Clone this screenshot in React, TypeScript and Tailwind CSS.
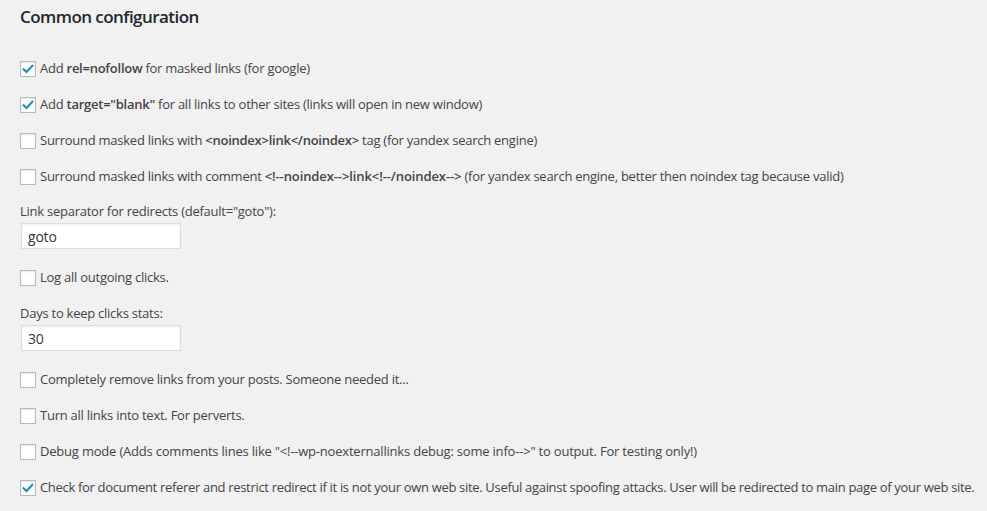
import type { ReactNode } from "react";

const FONT = "font-['Open_Sans','Noto_Sans',sans-serif]";

function Check({ checked }: { checked?: boolean }) {
  return (
    <span className="relative mr-[4px] inline-flex h-[16px] w-[16px] shrink-0 items-center justify-center border border-[#b4b9be] bg-white shadow-[inset_0_1px_2px_rgba(0,0,0,0.1)]">
      {checked && (
        <svg viewBox="0 0 16 16" className="h-[14px] w-[14px]">
          <path d="M3 8.2 L6.3 11.5 L13 4.3" fill="none" stroke="#1e8cbe" strokeWidth="2.4" strokeLinecap="square" />
        </svg>
      )}
    </span>
  );
}

function Row({ checked, children, className = "" }: { checked?: boolean; children: ReactNode; className?: string }) {
  return (
    <label className={`flex h-[36px] items-center whitespace-nowrap ${className}`}>
      <Check checked={checked} />
      <span>{children}</span>
    </label>
  );
}

function Field({ label, value, className = "" }: { label: string; value: string; className?: string }) {
  return (
    <div className={className}>
      <div className="flex h-[20px] items-center">{label}</div>
      <div className="mt-[1px] ml-[1px] flex h-[26px] w-[160px] items-center border border-[#ddd] bg-white px-[6px] text-[14px] tracking-[-0.2px] text-[#32373c] shadow-[inset_0_1px_2px_rgba(0,0,0,0.07)]">
        {value}
      </div>
    </div>
  );
}

export default function App() {
  return (
    <div className={`h-[511px] w-[987px] overflow-hidden bg-[#f1f1f1] pl-[20px] text-[13px] tracking-[-0.25px] text-[#444] ${FONT}`}>
      <h2 className="flex h-[34px] items-center text-[17px] font-semibold tracking-[-0.55px] text-[#23282d]">Common configuration</h2>

      <div className="mt-[17px]">
        <Row checked>
          Add <b className="font-semibold">rel=nofollow</b> for masked links (for google)
        </Row>
        <Row checked>
          Add <b className="font-semibold">target="blank"</b> for all links to other sites (links will open in new window)
        </Row>
        <Row>
          Surround masked links with <b className="font-semibold">&lt;noindex&gt;link&lt;/noindex&gt;</b> tag (for yandex search engine)
        </Row>
        <Row>
          Surround masked links with comment <b className="font-semibold tracking-[-0.1px]">&lt;!--noindex--&gt;link&lt;!--/noindex--&gt;</b> (for yandex search engine, better then noindex tag because valid)
        </Row>
      </div>

      <Field className="mt-[7px]" label='Link separator for redirects (default="goto"):' value="goto" />

      <Row className="mt-[11px]">Log all outgoing clicks.</Row>

      <Field className="mt-[8px]" label="Days to keep clicks stats:" value="30" />

      <div className="mt-[11px]">
        <Row>Completely remove links from your posts. Someone needed it...</Row>
        <Row>Turn all links into text. For perverts.</Row>
        <Row className="tracking-[-0.2px]">Debug mode (Adds comments lines like "&lt;!--wp-noexternallinks debug: some info--&gt;" to output. For testing only!)</Row>
        <Row checked className="tracking-[-0.32px]">
          Check for document referer and restrict redirect if it is not your own web site. Useful against spoofing attacks. User will be redirected to main page of your web site.
        </Row>
      </div>
    </div>
  );
}
